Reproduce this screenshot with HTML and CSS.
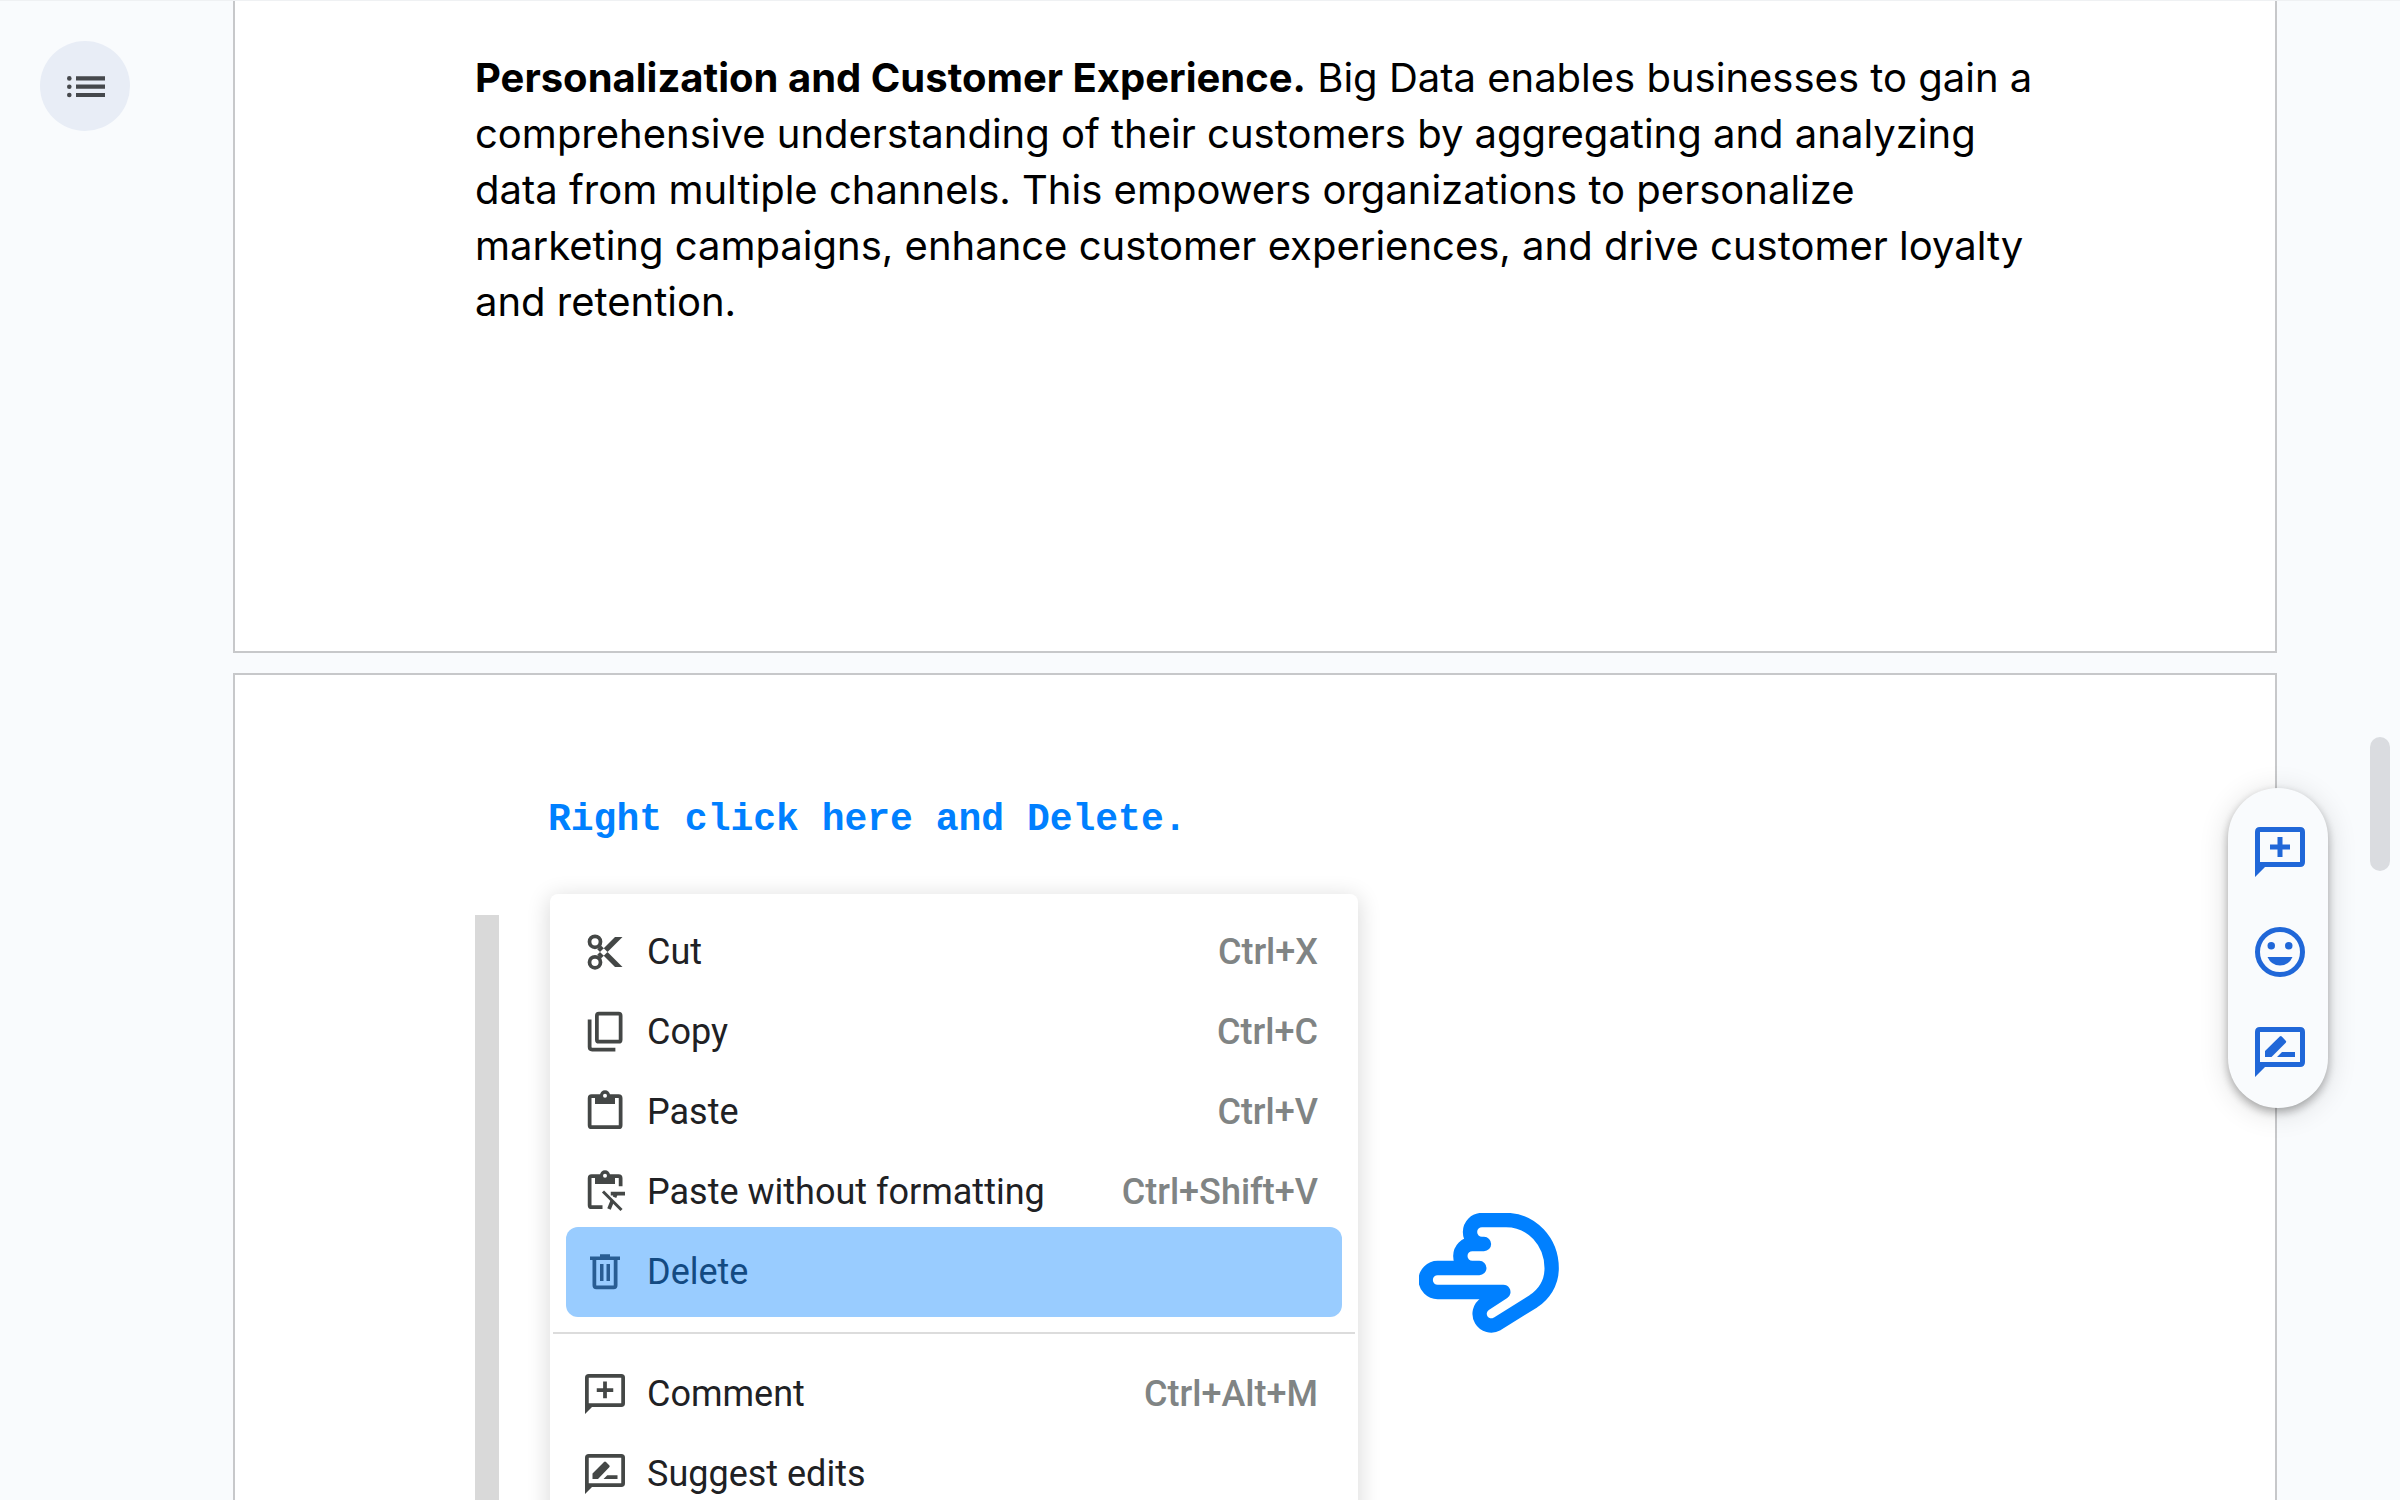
FILE: index.html
```html
<!DOCTYPE html>
<html lang="en">
<head>
<meta charset="utf-8">
<title>Document editor</title>
<link rel="stylesheet" href="styles.css">
</head>
<body>
<svg class="sprite" aria-hidden="true">
  <symbol id="comment-sm" viewBox="0 0 20 20">
    <path fill-rule="evenodd" d="M2 18V3.500Q2 2 3.500 2h13Q18 2 18 3.500v10.200q0 1.500-1.500 1.500H4.800zM3.500 13.700h13V3.500h-13zM9.250 11.700h1.500V9.150h2.550v-1.500h-2.550V5h-1.500v2.650H6.700v1.500h2.550z"/>
  </symbol>
  <symbol id="suggest-sm" viewBox="0 0 20 20">
    <path fill-rule="evenodd" d="M2 18V3.500Q2 2 3.500 2h13Q18 2 18 3.500v10.200q0 1.500-1.500 1.500H4.800zM3.500 13.700h13V3.500h-13zM5 12V9.800L9.600 5.200q.4-.4.800 0l1.300 1.300q.4.400 0 .800L7.200 12zM9.400 12l1.500-1.500H15V12z"/>
  </symbol>
</svg>

<div class="workspace">
  <aside class="outline">
    <button class="outline-toggle" type="button" aria-label="Show outline">
      <svg viewBox="0 0 40 24" width="40" height="24" fill="#45484c">
        <circle cx="4.300" cy="4.400" r="2.300"/><circle cx="4.300" cy="12.700" r="2.300"/><circle cx="4.300" cy="21" r="2.300"/>
        <path d="M11 2.300h29v4.200H11zM11 10.600h29v4.200H11zM11 18.900h29v4.200H11z"/>
      </svg>
    </button>
  </aside>

  <main class="pages">
    <article class="page page-first">
      <p class="body-text"><strong>Personalization and Customer Experience.</strong> Big Data enables businesses to gain a comprehensive understanding of their customers by aggregating and analyzing data from multiple channels. This empowers organizations to personalize marketing campaigns, enhance customer experiences, and drive customer loyalty and retention.</p>
    </article>

    <article class="page page-second">
      <h2 class="hint">Right click here and Delete.</h2>
      <div class="demo">
        <div class="selection-bar"></div>
        <div class="menu" role="menu">
          <button class="item" type="button" role="menuitem">
            <svg class="icon" viewBox="0 0 20 20">
              <g fill="none" stroke="currentColor" stroke-width="1.500"><circle cx="6" cy="5.900" r="2.200"/><circle cx="6" cy="14.100" r="2.200"/></g>
              <path d="M14 4H17l-8.600 8.600-1.500-1.500zM14 16H17L8.400 7.400 6.900 8.900z"/><circle cx="10" cy="10" r=".400" fill="#fff"/>
            </svg>
            <span class="label">Cut</span><kbd class="keys">Ctrl+X</kbd>
          </button>
          <button class="item" type="button" role="menuitem">
            <svg class="icon" viewBox="0 0 20 20" fill="none" stroke="currentColor" stroke-width="1.500">
              <rect x="6.750" y="2.650" width="9.500" height="11.200" rx=".800"/><path d="M3.850 5v11q0 1 1 1h9.300"/>
            </svg>
            <span class="label">Copy</span><kbd class="keys">Ctrl+C</kbd>
          </button>
          <button class="item" type="button" role="menuitem">
            <svg class="icon" viewBox="0 0 20 20">
              <rect x="3.850" y="3.650" width="12.400" height="12.400" rx=".800" fill="none" stroke="currentColor" stroke-width="1.500"/>
              <path d="M6 4h8v2.800H6z"/><circle cx="10" cy="3.300" r="2"/><circle cx="10" cy="3.500" r=".800" fill="#fff"/>
            </svg>
            <span class="label">Paste</span><kbd class="keys">Ctrl+V</kbd>
          </button>
          <button class="item" type="button" role="menuitem">
            <svg class="icon" viewBox="0 0 20 20">
              <path fill="none" stroke="currentColor" stroke-width="1.500" d="M16.250 7.700V4.450q0-.8-.8-.8H4.650q-.8 0-.8.800v10.800q0 .8.800.8H9M12.300 10.600h5.700"/>
              <path d="M6 4h8v2.800H6z"/><circle cx="10" cy="3.300" r="2"/><circle cx="10" cy="3.500" r=".800" fill="#fff"/>
              <path fill="none" stroke="currentColor" stroke-width="1.200" d="m9.200 9.800 7.400 7.400"/>
              <path fill="none" stroke="currentColor" stroke-width="1.500" d="m12.900 13.600-1.300 3.200M14.400 10.500l-.6 1.600"/>
            </svg>
            <span class="label">Paste without formatting</span><kbd class="keys">Ctrl+Shift+V</kbd>
          </button>
          <button class="item item-active" type="button" role="menuitem">
            <svg class="icon" viewBox="0 0 20 20">
              <path d="M4 3.800h4V2.900h4v.900h4v1.400H4z"/>
              <path fill="none" stroke="currentColor" stroke-width="1.500" d="M5.750 4.500v10.800q0 .8.800.8h6.900q.8 0 .8-.8V4.500"/>
              <path fill="none" stroke="currentColor" stroke-width="1.400" d="M8.700 6.800v6.800M11.300 6.800v6.800"/>
            </svg>
            <span class="label">Delete</span>
          </button>
          <hr class="divider">
          <button class="item" type="button" role="menuitem">
            <svg class="icon"><use href="#comment-sm"/></svg>
            <span class="label">Comment</span><kbd class="keys">Ctrl+Alt+M</kbd>
          </button>
          <button class="item" type="button" role="menuitem">
            <svg class="icon"><use href="#suggest-sm"/></svg>
            <span class="label">Suggest edits</span>
          </button>
        </div>
        <svg class="hand" viewBox="57 69 420 360" fill="none" stroke="#0080ff" stroke-width="43" stroke-linecap="round" stroke-linejoin="round" aria-hidden="true">
          <path d="M252 162H246A36 36 0 0 1 246 90H318C395 90 455 155 455 235C455 280 430 314 400 334L291 402A35 35 0 0 1 255 342L310 306H113A36 36 0 0 1 113 234H238M252 162H217A36 36 0 0 0 217 234"/>
        </svg>
      </div>
    </article>
  </main>
</div>

<div class="quick-actions">
  <button class="quick" type="button" aria-label="Add comment">
    <svg viewBox="0 0 24 24"><path fill-rule="evenodd" d="M2 22V4q0-2 2-2h16q2 0 2 2v12q0 2-2 2H6zM4 16h16V4H4zM11 14h2v-3h3V9h-3V6h-2v3H8v2h3z"/></svg>
  </button>
  <button class="quick" type="button" aria-label="Add emoji reaction">
    <svg viewBox="0 0 24 24"><circle cx="12" cy="12" r="9" fill="none" stroke="currentColor" stroke-width="2"/><circle cx="8.500" cy="9.500" r="1.500"/><circle cx="15.500" cy="9.500" r="1.500"/><path d="M7 14h10q-1.500 3.400-5 3.400T7 14z"/></svg>
  </button>
  <button class="quick" type="button" aria-label="Suggest edits">
    <svg viewBox="0 0 24 24"><path fill-rule="evenodd" d="M2 22V4q0-2 2-2h16q2 0 2 2v12q0 2-2 2H6zM4 16h16V4H4zM6 14v-2.450l5.900-5.800q.4-.4.800 0l1.600 1.700q.4.400 0 .8L8.600 14zM10.800 14l2-2H18v2z"/></svg>
  </button>
</div>
<div class="scroll-thumb"></div>
</body>
</html>
```
FILE: styles.css
```css
* {
  box-sizing: border-box;
}

body {
  margin: 0;
  height: 100vh;
  overflow: hidden;
  background: #f9fbfd;
  font-family: Roboto, "Liberation Sans", sans-serif;
}

button {
  margin: 0;
  padding: 0;
  border: 0;
  background: none;
  font: inherit;
  color: inherit;
  cursor: pointer;
}

.sprite {
  position: absolute;
  width: 0;
  height: 0;
}

.workspace {
  display: grid;
  grid-template-columns: 233px 1fr 123px;
  border-top: 1px solid #eff1f3;
}

.outline {
  padding: 40px;
}

.outline-toggle {
  display: flex;
  align-items: center;
  justify-content: center;
  width: 90px;
  height: 90px;
  border-radius: 50%;
  background: #e8edf6;
}

.pages {
  display: flex;
  flex-direction: column;
  gap: 20px;
}

.page {
  padding: 0 240px;
  border: 2px solid #c7c8ca;
  background: #fff;
}

.page-first {
  padding-top: 49px;
  padding-bottom: 321px;
  border-top: 0;
}

.page-second {
  padding-top: 117px;
}

.body-text {
  margin: 0;
  font-family: Inter, sans-serif;
  font-size: 40px;
  line-height: 56px;
  color: #000;
}

.hint {
  margin: 0 0 46px 73px;
  font-family: "Liberation Mono", monospace;
  font-size: 38px;
  line-height: 56px;
  font-weight: 700;
  color: #0080ff;
}

.demo {
  display: flex;
  align-items: flex-start;
}

.selection-bar {
  align-self: stretch;
  width: 24px;
  margin-top: 21px;
  margin-right: 51px;
  background: #d9d9d9;
}

.menu {
  display: flex;
  flex-direction: column;
  width: 808px;
  padding: 18px 0;
  border-radius: 8px;
  background: #fff;
  box-shadow: 0 4px 22px 2px rgba(0, 0, 0, 0.14);
}

.item {
  display: flex;
  align-items: center;
  height: 80px;
  padding: 0 40px 0 30px;
  font-size: 36px;
  color: #202124;
  text-align: left;
}

.item-active {
  height: 90px;
  margin: -5px 16px;
  padding: 0 24px 0 14px;
  border-radius: 12px;
  background: #99ccff;
  color: #134a82;
}

.icon {
  width: 50px;
  height: 50px;
  margin-right: 17px;
  fill: currentColor;
  color: #444746;
}

.icon[fill="none"] {
  fill: none;
}

.item-active .icon {
  color: #295d93;
}

.label {
  flex: 1;
}

.keys {
  font-family: inherit;
  font-weight: 500;
  color: #808484;
}

.divider {
  width: 802px;
  height: 2px;
  margin: 20px auto;
  border: 0;
  background: #dcdcdc;
}

.hand {
  width: 140px;
  height: 120px;
  margin-top: 319px;
  margin-left: 61px;
}

.quick-actions {
  position: fixed;
  top: 788px;
  right: 72px;
  display: flex;
  flex-direction: column;
  align-items: center;
  gap: 40px;
  width: 100px;
  padding: 34px 0 26px 4px;
  border-radius: 50px;
  background: #f9fbfd;
  box-shadow: 0 4px 10px rgba(0, 0, 0, 0.3), 0 4px 30px rgba(0, 0, 0, 0.14);
}

.quick {
  width: 60px;
  height: 60px;
  color: #2067d8;
}

.quick svg {
  display: block;
  fill: currentColor;
}

.scroll-thumb {
  position: fixed;
  top: 737px;
  right: 10px;
  width: 20px;
  height: 134px;
  border-radius: 10px;
  background: #dadce0;
}
```
